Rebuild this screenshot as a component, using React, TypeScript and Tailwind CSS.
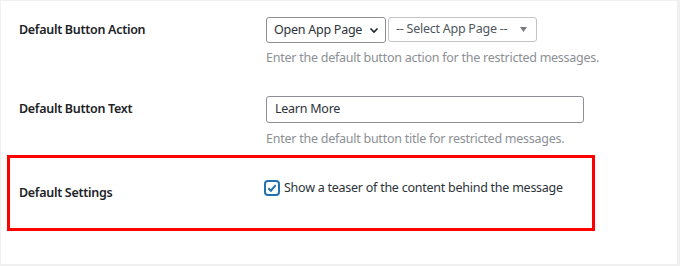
import React from 'react';

const font = { fontFamily: '"Noto Sans", "Open Sans", sans-serif' };

const Label: React.FC<{ children: React.ReactNode; w?: string }> = ({ children, w = 'w-[247px]' }) => (
  <div className={`${w} shrink-0 text-[12.5px] font-semibold tracking-[-0.3px] text-[#1d2327]`}>{children}</div>
);

export default function App() {
  return (
    <div className="w-[680px] h-[266px] bg-[#f0f0f1] p-[1px] pr-[3px] pb-[2px] tracking-[-0.25px]" style={font}>
      <div className="h-full bg-white pl-[6px] pt-[16px]">
        {/* Default Button Action */}
        <div className="flex pl-[12px]">
          <div className="pt-[4px]">
            <Label>Default Button Action</Label>
          </div>
          <div>
            <div className="flex gap-[2px]">
              <div className="flex h-[26px] w-[120px] items-center justify-between rounded-[3px] border border-[#8c8f94] pl-[7px] pr-[6px] text-[12.5px] text-[#2c3338]">
                <span>Open App Page</span>
                <svg width="10" height="10" viewBox="0 0 10 10" fill="none" stroke="#1d2327" strokeWidth="1.6">
                  <path d="M1.5 3.5 L5 7 L8.5 3.5" />
                </svg>
              </div>
              <div className="flex h-[25px] w-[149px] items-center justify-between rounded-[3px] border border-[#c3c4c7] pl-[7px] pr-[9px] text-[12.5px] text-[#50575e]">
                <span>-- Select App Page --</span>
                <svg width="7" height="5" viewBox="0 0 7 5" fill="#787c82">
                  <path d="M0 0 H7 L3.5 5 Z" />
                </svg>
              </div>
            </div>
            <p className="mt-[6px] text-[12.5px] text-[#8c8f94]">Enter the default button action for the restricted messages.</p>
          </div>
        </div>

        {/* Default Button Text */}
        <div className="mt-[28px] flex pl-[12px]">
          <div className="pt-[4px]">
            <Label>Default Button Text</Label>
          </div>
          <div>
            <div className="flex h-[27px] w-[318px] items-center rounded-[3px] border border-[#8c8f94] px-[8px] text-[12.5px] text-[#2c3338]">
              Learn More
            </div>
            <p className="mt-[7px] text-[12.5px] text-[#8c8f94]">Enter the default button title for restricted messages.</p>
          </div>
        </div>

        {/* Default Settings (highlighted) */}
        <div className="mt-[6px] mr-[82px] flex h-[76px] items-center border-[3px] border-[#f00] pl-[9px]">
          <div className="pt-[1px]">
            <Label w="w-[245px]">Default Settings</Label>
          </div>
          <div className="-mt-[9px] flex items-center gap-[4px]">
            <span className="flex h-[16px] w-[16px] items-center justify-center rounded-[4px] border-2 border-[#2271b1]">
              <svg width="12" height="12" viewBox="0 0 12 12" fill="none" stroke="#2271b1" strokeWidth="2">
                <path d="M2.3 6.2 L4.9 8.7 L9.7 3.2" />
              </svg>
            </span>
            <span className="text-[12.5px] text-[#2c3338]">Show a teaser of the content behind the message</span>
          </div>
        </div>
      </div>
    </div>
  );
}
